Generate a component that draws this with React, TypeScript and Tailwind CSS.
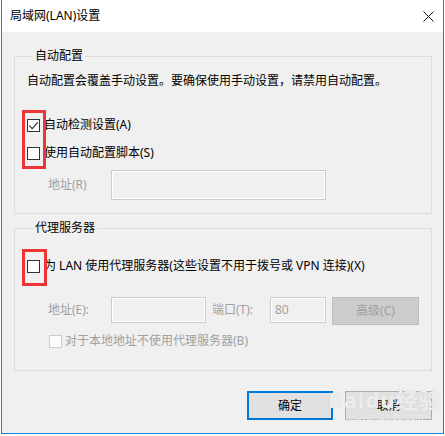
import React from "react";

const Box = ({ checked = false, disabled = false }: { checked?: boolean; disabled?: boolean }) => {
  return (
    <span
      className={
        "flex size-[13px] shrink-0 items-center justify-center border " +
        (disabled ? "border-[#cccccc] bg-[#fcfcfc]" : "border-[#333333] bg-white")
      }
    >
      {checked && (
        <svg width="11" height="11" viewBox="0 0 11 11" fill="none">
          <path d="M1.2 5.6 L4.2 8.6 L9.8 2.4" stroke="#333333" strokeWidth="1.2" />
        </svg>
      )}
    </span>
  );
};

const App = () => {
  return (
    <div className="w-[445px] h-[436px] bg-white font-['Noto_Sans','Noto_Sans_CJK_SC',sans-serif] text-[12px] leading-[16px] text-black">
      <div className="relative ml-[1px] flex h-[434px] w-[443px] flex-col border-x border-b border-[#1883d7] bg-[#f0f0f0]">
        {/* TITLE BAR */}
        <div className="flex h-[32px] items-center justify-between bg-white pl-[8px] pr-[9px]">
          <span>局域网(LAN)设置</span>
          <svg width="11" height="11" viewBox="0 0 11 11" fill="none">
            <path d="M0.5 0.5 L10.5 10.5 M10.5 0.5 L0.5 10.5" stroke="#111111" strokeWidth="1" />
          </svg>
        </div>

        {/* BODY */}
        <div className="flex flex-col pl-[12px] pr-[11px]">
          {/* AUTO CONFIG */}
          <fieldset className="mt-[16px] border border-[#dcdcdc] pl-[12px] pb-[13px]">
            <legend className="ml-[6px] px-[2px]">自动配置</legend>
            <p className="mt-[9px]">自动配置会覆盖手动设置。要确保使用手动设置，请禁用自动配置。</p>
            <label className="mt-[28px] flex h-[16px] items-center gap-[4px]">
              <Box checked />
              <span>自动检测设置(A)</span>
            </label>
            <label className="mt-[12px] flex h-[16px] items-center gap-[4px]">
              <Box />
              <span>使用自动配置脚本(S)</span>
            </label>
            <div className="mt-[9px] flex items-center">
              <span className="ml-[21px] w-[63px] text-[#a0a0a0]">地址(R)</span>
              <div className="h-[30px] w-[215px] border border-[#cccccc] bg-[#f0f0f0] shadow-[inset_0_0_0_1px_#ffffff]" />
            </div>
          </fieldset>

          {/* PROXY */}
          <fieldset className="mt-[6px] border border-[#dcdcdc] pl-[12px] pb-[21px]">
            <legend className="ml-[6px] px-[2px]">代理服务器</legend>
            <label className="mt-[22px] flex h-[16px] items-center gap-[4px]">
              <Box />
              <span>为 LAN 使用代理服务器(这些设置不用于拨号或 VPN 连接)(X)</span>
            </label>
            <div className="mt-[23px] flex h-[28px] items-start">
              <div className="flex h-[26px] items-center">
                <span className="ml-[21px] w-[63px] text-[#a0a0a0]">地址(E):</span>
                <div className="h-[26px] w-[95px] border border-[#cccccc] bg-[#f0f0f0] shadow-[inset_0_0_0_1px_#ffffff]" />
                <span className="ml-[6px] w-[58px] text-[#a0a0a0]">端口(T):</span>
                <div className="flex h-[26px] w-[56px] items-center border border-[#cccccc] bg-[#f0f0f0] pl-[4px] text-[#a0a0a0] shadow-[inset_0_0_0_1px_#ffffff]">
                  80
                </div>
              </div>
              <div className="ml-[6px] flex h-[28px] w-[87px] items-center justify-center border border-[#bfbfbf] bg-[#cccccc] text-[#a0a0a0]">
                高级(C)
              </div>
            </div>
            <label className="mt-[8px] ml-[22px] flex h-[16px] items-center gap-[3px] text-[#a0a0a0]">
              <Box disabled />
              <span>对于本地地址不使用代理服务器(B)</span>
            </label>
          </fieldset>
        </div>

        {/* BUTTONS */}
        <div className="mt-[20px] flex justify-end gap-[12px] pr-[11px]">
          <button className="flex h-[29px] w-[86px] items-center justify-center border-2 border-[#0078d7] bg-[#e1e1e1]">
            确定
          </button>
          <button className="flex h-[29px] w-[87px] items-center justify-center border border-[#adadad] bg-[#e1e1e1]">
            取消
          </button>
        </div>

        {/* ANNOTATIONS */}
        <div className="absolute left-[20px] top-[110px] h-[59px] w-[24px] border-[3px] border-[#ee3535]" />
        <div className="absolute left-[20px] top-[249px] h-[37px] w-[25px] border-[3px] border-[#ee3535]" />

        {/* WATERMARK */}
        <div className="pointer-events-none absolute left-[326px] top-[386px] flex flex-col items-center text-white/70 [text-shadow:0_0_1px_#c4c4c4]">
          <span className="text-[22px] leading-[26px] font-bold tracking-[1px]">Baidu经验</span>
          <span className="text-[9px] leading-[10px]">jingyan.baidu.com</span>
        </div>
      </div>
    </div>
  );
};

export default App;
